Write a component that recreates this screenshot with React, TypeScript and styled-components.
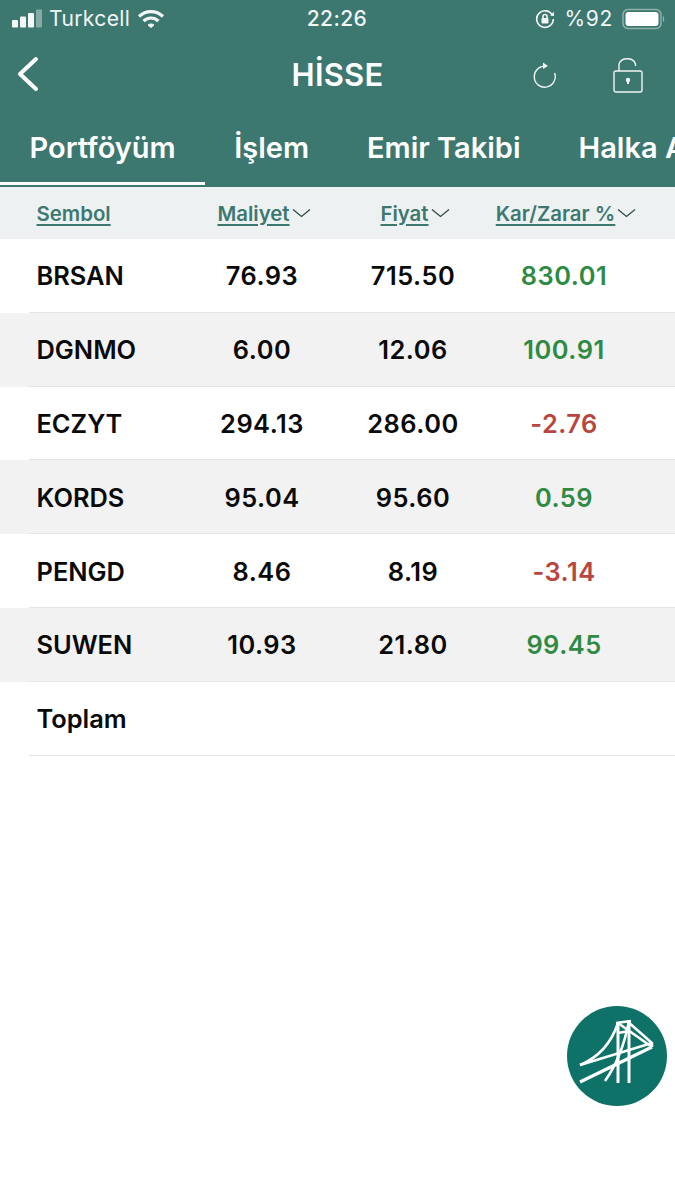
import React from "react";
import styled, { createGlobalStyle } from "styled-components";

const Global = createGlobalStyle`
  html, body { margin: 0; padding: 0; background: #fff; }
  body { font-family: Inter, "Liberation Sans", sans-serif; }
`;
const Page = styled.div`
  width: 675px; height: 1200px; overflow: hidden; position: relative; background: #fff;
`;
const Top = styled.header`
  background: #3d7870; color: #fff; height: 187px; display: flex; flex-direction: column;
`;
const StatusBar = styled.div`
  height: 37px; display: grid; grid-template-columns: 1fr auto 1fr; align-items: center;
  padding: 0 9px 0 12px; font-size: 21px; color: #f1f6f5;
`;
const StatusLeft = styled.div`display: flex; align-items: center; gap: 7px;`;
const StatusRight = styled.div`display: flex; align-items: center; justify-content: flex-end; gap: 9px;`;
const Carrier = styled.span`letter-spacing: 0.4px;`;
const Clock = styled.span`font-weight: 500; letter-spacing: .4px; padding-right: 4px;`;
const Percent = styled.span`letter-spacing: 0.7px;`;
const NavBar = styled.div`
  height: 78px; display: grid; grid-template-columns: 1fr auto 1fr; align-items: center; padding: 0 16px;
`;
const NavRight = styled.div`
  display: flex; justify-content: flex-end; align-items: center; gap: 56px; padding: 0 16px 3px 0;
`;
const Title = styled.div`font-size: 31px; font-weight: 600; letter-spacing: 0.2px; padding-bottom: 4px;`;
const Tabs = styled.nav`display: flex; height: 72px; overflow: hidden;`;
const Tab = styled.div<{ $active?: boolean }>`
  flex: none; padding: 0 29.5px 2px; display: flex; align-items: center; font-size: 29px; font-weight: 600;
  white-space: nowrap; box-sizing: border-box; height: 70px;
  border-bottom: 3px solid ${(p) => (p.$active ? "#fff" : "transparent")};
  & + & { padding-left: 29px; padding-right: 29px; }
`;
const Grid = styled.div`
  display: grid; grid-template-columns: 150px 151px 151px 151px; padding-left: 36.5px; align-items: center;
`;
const HeadRow = styled(Grid)`height: 52px; background: #edf1f2;`;
const HeadCell = styled.div<{ $center?: boolean }>`
  display: flex; align-items: center; gap: 2px; justify-content: ${(p) => (p.$center ? "center" : "flex-start")};
  padding-left: ${(p) => (p.$center ? "4px" : "0")};
`;
const HeadText = styled.span`
  color: #3d7870; font-size: 20.4px; font-weight: 600; text-decoration: underline; text-underline-offset: 3px;
  text-decoration-thickness: 2px; white-space: nowrap;
`;
const Row = styled.div<{ $alt?: boolean }>`
  background: ${(p) => (p.$alt ? "#f2f2f2" : "#fff")}; position: relative; height: 73.8px;
  &::after { content: ""; position: absolute; left: 29px; right: 0; bottom: 0; height: 1px; background: #e4e6e6; }
`;
const RowGrid = styled(Grid)`height: 100%;`;
const Sym = styled.div`font-size: 25.4px; font-weight: 600; color: #0a0a0a;`;
const Val = styled.div<{ $c?: string }>`
  font-size: 25.4px; font-weight: 600; text-align: center;
  letter-spacing: 0.5px; color: ${(p) => p.$c || "#0a0a0a"};
`;
const Fab = styled.div`
  position: absolute; left: 567px; top: 1006px; width: 100px; height: 100px; border-radius: 50%; background: #0f7268;
  display: flex; align-items: center; justify-content: center;
`;

const Chevron = () => (
  <svg width="19" height="10" viewBox="0 0 19 10" fill="none" stroke="#2f4a48" strokeWidth="1.3"><path d="M1 1.5 L9.5 8.5 L18 1.5" /></svg>
);
const Signal = () => (
  <svg width="30" height="20" viewBox="0 0 30 20" fill="#f4f8f7">
    <rect x="0" y="11" width="6" height="7.5" rx="1" />
    <rect x="8" y="7.5" width="6" height="11" rx="1" />
    <rect x="16" y="4" width="6" height="14.5" rx="1" />
    <rect x="24" y="0.5" width="6" height="18" rx="1" opacity=".4" />
  </svg>
);
const Wifi = () => (
  <svg width="28" height="20" viewBox="0 0 28 20" fill="none" stroke="#f4f8f7" strokeWidth="3.2">
    <path d="M2 7.5 C9 1 19 1 26 7.5" />
    <path d="M6.5 12 C11 8 17 8 21.5 12" />
    <path d="M11 16 L14 18.5 L17 16 C15 14.6 13 14.6 11 16 Z" fill="#f4f8f7" strokeWidth="1" />
  </svg>
);
const RotLock = () => (
  <svg width="20" height="20" viewBox="0 0 20 20" fill="none" stroke="#f4f8f7" strokeWidth="1.6">
    <path d="M17.5 6.5 A8.3 8.3 0 1 0 18.3 10" />
    <path d="M15 6.5 L19 7 L19 2.8" fill="#f4f8f7" stroke="none" />
    <rect x="6.5" y="9" width="7" height="5.5" rx="1" fill="#f4f8f7" stroke="none" />
    <path d="M8 9 V7.5 a2 2 0 0 1 4 0 V9" />
  </svg>
);
const Battery = () => (
  <svg width="44" height="22" viewBox="0 0 44 22">
    <rect x="1" y="1.5" width="38" height="19" rx="5" fill="none" stroke="#f4f8f7" strokeOpacity=".45" strokeWidth="1.5" />
    <rect x="3.5" y="4" width="33" height="14" rx="3" fill="#fff" />
    <path d="M41 8 c1.6 .5 1.6 5.5 0 6 z" fill="#f4f8f7" fillOpacity=".5" />
  </svg>
);
const Back = () => (
  <svg width="24" height="36" viewBox="0 0 24 36" fill="none" stroke="#fff" strokeWidth="4" strokeLinecap="round" strokeLinejoin="round"><path d="M20 3 L4 18 L20 33" /></svg>
);
const Refresh = () => (
  <svg width="26" height="28" viewBox="0 0 26 28" fill="none" stroke="#f0f5f4" strokeWidth="1.4">
    <path d="M14.5 5.2 A10.5 10.5 0 1 0 23.6 12" />
    <path d="M12 1.5 L17 5 L12 8 Z" fill="#f0f5f4" stroke="none" />
  </svg>
);
const Lock = () => (
  <svg width="30" height="38" viewBox="0 0 30 38" fill="none" stroke="#f0f5f4" strokeWidth="1.4">
    <rect x="1" y="15" width="28" height="21" rx="2" />
    <path d="M6 15 V8 A8.5 7 0 0 1 22.5 8 V10" />
    <circle cx="15" cy="24" r="2.2" fill="#f0f5f4" stroke="none" />
    <rect x="14" y="24" width="2" height="4" fill="#f0f5f4" stroke="none" />
  </svg>
);
const Bridge = () => (
  <svg width="100" height="100" viewBox="0 0 100 100" fill="none" stroke="#fff" strokeWidth="2.6">
    <path d="M51 16 V77" strokeWidth="3" />
    <path d="M62 15 V77" strokeWidth="3" />
    <path d="M49 17 L64 15" />
    <path d="M51 27 L62 25" />
    <path d="M13 59 C30 52 44 38 51 17" />
    <path d="M38 75 C50 58 58 36 62 15" />
    <path d="M60 15 L85 37 L85 41" />
    <path d="M51 17 L85 41" />
    <path d="M13 59 L85 37" />
    <path d="M13 76 L85 41" strokeWidth="3.2" />
  </svg>
);

const GREEN = "#2f8a43";
const RED = "#b8463f";
const rows: [string, string, string, string, string][] = [
  ["BRSAN", "76.93", "715.50", "830.01", GREEN],
  ["DGNMO", "6.00", "12.06", "100.91", GREEN],
  ["ECZYT", "294.13", "286.00", "-2.76", RED],
  ["KORDS", "95.04", "95.60", "0.59", GREEN],
  ["PENGD", "8.46", "8.19", "-3.14", RED],
  ["SUWEN", "10.93", "21.80", "99.45", GREEN],
];

export default function App() {
  return (
    <Page>
      <Global />
      <Top>
        <StatusBar>
          <StatusLeft><Signal /><Carrier>Turkcell</Carrier><Wifi /></StatusLeft>
          <Clock>22:26</Clock>
          <StatusRight><RotLock /><Percent>%92</Percent><Battery /></StatusRight>
        </StatusBar>
        <NavBar>
          <div><Back /></div>
          <Title>HİSSE</Title>
          <NavRight><Refresh /><Lock /></NavRight>
        </NavBar>
        <Tabs>
          <Tab $active>Portföyüm</Tab>
          <Tab>İşlem</Tab>
          <Tab>Emir Takibi</Tab>
          <Tab>Halka Arz</Tab>
        </Tabs>
      </Top>
      <HeadRow>
        <HeadCell><HeadText>Sembol</HeadText></HeadCell>
        <HeadCell $center><HeadText>Maliyet</HeadText><Chevron /></HeadCell>
        <HeadCell $center><HeadText>Fiyat</HeadText><Chevron /></HeadCell>
        <HeadCell $center><HeadText>Kar/Zarar %</HeadText><Chevron /></HeadCell>
      </HeadRow>
      {rows.map((r, i) => (
        <Row key={r[0]} $alt={i % 2 === 1}>
          <RowGrid>
            <Sym>{r[0]}</Sym>
            <Val>{r[1]}</Val>
            <Val>{r[2]}</Val>
            <Val $c={r[4]}>{r[3]}</Val>
          </RowGrid>
        </Row>
      ))}
      <Row>
        <RowGrid><Sym>Toplam</Sym></RowGrid>
      </Row>
      <Fab><Bridge /></Fab>
    </Page>
  );
}
